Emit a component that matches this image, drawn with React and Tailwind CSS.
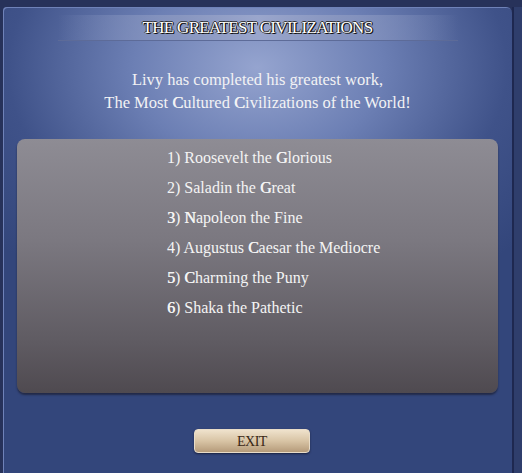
import React from 'react'

const serif = { fontFamily: '"Liberation Serif", "DejaVu Serif", serif' }

const Hv = ({ children }) => (
  <span className="[text-shadow:0.5px_0_0_currentColor]">{children}</span>
)

const leaders = [
  <>1) Roosevelt the <Hv>G</Hv>lorious</>,
  <>2) Saladin the <Hv>G</Hv>reat</>,
  <><Hv>3</Hv>) <Hv>N</Hv>apoleon the Fine</>,
  <>4) Augustus <Hv>C</Hv>aesar the Mediocre</>,
  <><Hv>5</Hv>) <Hv>C</Hv>harming the Puny</>,
  <><Hv>6</Hv>) Shaka the Pathetic</>,
]

const App = () => {
  return (
    <div className="w-[522px] h-[473px] bg-[#27325a] flex pt-[7px] overflow-hidden" style={serif}>
      {/* main dialog panel */}
      <div className="ml-[3px] w-[509px] h-full rounded-tl-[4px] rounded-tr-[6px] flex flex-col items-center bg-[radial-gradient(ellipse_70%_55%_at_50%_13%,#95a4cf_0%,#6c7fb4_35%,#3f5289_70%,#33467b_100%)] shadow-[inset_1px_1px_0_#6f82b8]">
        {/* title band */}
        <div className="mt-[8px] w-[400px] h-[26px] flex items-center justify-center bg-[linear-gradient(90deg,transparent,#8795bf_30%,#9aa6cc_50%,#8795bf_70%,transparent)] border-b border-[#5d6b98]">
          <span className="text-[17px] tracking-[-0.7px] text-white [text-shadow:1px_1px_0_#111,-1px_0_0_#333,0_-1px_0_#333,1px_0_0_#222]">
            THE GREATEST CIVILIZATIONS
          </span>
        </div>

        {/* announcement */}
        <div className="mt-[27px] text-center text-[16.5px] leading-[23px] text-[#f2f2f4]">
          <div>Livy has completed his greatest work,</div>
          <div>The Most <Hv>C</Hv>ultured <Hv>C</Hv>ivilizations of the World!</div>
        </div>

        {/* ranking box */}
        <div className="mt-[25px] w-[481px] h-[254px] rounded-[8px] bg-[linear-gradient(180deg,#8e8c94_0%,#7b7880_40%,#5f5b62_80%,#4f4a50_100%)] shadow-[0_2px_2px_#222a48] pt-[4px] pl-[150px]">
          <ul className="text-[16px] leading-[30px] text-[#f4f4f4]">
            {leaders.map((l, i) => (
              <li key={i}>{l}</li>
            ))}
          </ul>
        </div>

        {/* exit button */}
        <button className="mt-[36px] mr-[11px] w-[116px] h-[24px] rounded-[4px] bg-[linear-gradient(180deg,#efe2cc_0%,#d8c4a5_50%,#b59b7a_100%)] border border-[#e8dcc8] shadow-[0_1px_2px_#1b2240] text-[14px] text-[#3a2815] tracking-[-0.5px]">
          EXIT
        </button>
      </div>

      {/* right frame strip */}
      <div className="w-[10px] h-full border-l-2 border-[#1e2850] bg-[#2f3e6c]" />
    </div>
  )
}

export default App
